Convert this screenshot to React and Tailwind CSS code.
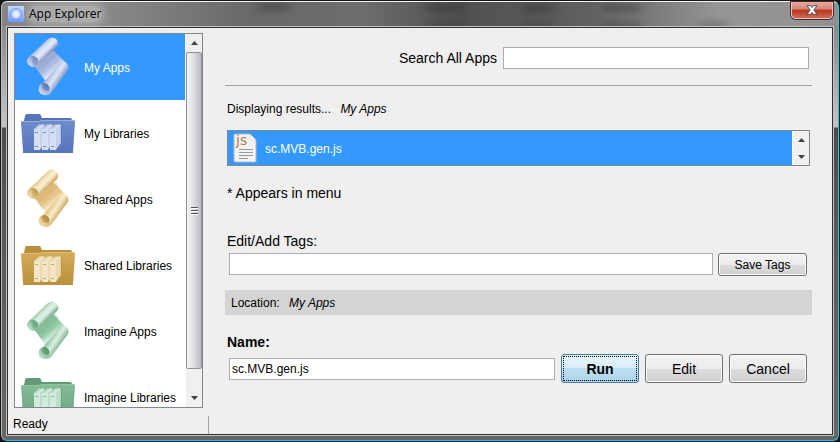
import React, { useState } from 'react';

const PALETTES = {
  blue: { light: '#dfe6f6', mid: '#a9b9e0', dark: '#6f86bd', deep: '#4f68a6', folder: '#6f8ccc', folderTop: '#5674b8', folderLow: '#5574bb', book: '#d5dff3' },
  gold: { light: '#f8ebcb', mid: '#e3c486', dark: '#c79d55', deep: '#a87c34', folder: '#d3ac59', folderTop: '#b88f3c', folderLow: '#b9913d', book: '#f3e6c8' },
  green: { light: '#dcefe2', mid: '#92c7a4', dark: '#64a77d', deep: '#4a8a62', folder: '#86bd98', folderTop: '#629a76', folderLow: '#6aa380', book: '#d3ebdb' },
};

const PLACES = [
  { label: 'My Apps', icon: 'scroll', tone: 'blue' },
  { label: 'My Libraries', icon: 'folder', tone: 'blue' },
  { label: 'Shared Apps', icon: 'scroll', tone: 'gold' },
  { label: 'Shared Libraries', icon: 'folder', tone: 'gold' },
  { label: 'Imagine Apps', icon: 'scroll', tone: 'green' },
  { label: 'Imagine Libraries', icon: 'folder', tone: 'green' },
];

function ScrollIcon({ tone }) {
  const c = PALETTES[tone];
  const id = `scroll-${tone}`;
  return (
    <svg viewBox="0 0 54 60" className="h-[60px] w-[54px] shrink-0" aria-hidden="true">
      <defs>
        <linearGradient id={`${id}-sheet`} gradientUnits="userSpaceOnUse" x1="22" y1="20" x2="38" y2="40">
          <stop offset="0" stopColor={c.mid} />
          <stop offset="0.45" stopColor={c.mid} />
          <stop offset="0.72" stopColor={c.light} />
          <stop offset="1" stopColor={c.dark} />
        </linearGradient>
        <linearGradient id={`${id}-top`} gradientUnits="userSpaceOnUse" x1="17" y1="11" x2="26" y2="20">
          <stop offset="0" stopColor={c.mid} />
          <stop offset="0.35" stopColor={c.light} />
          <stop offset="0.6" stopColor={c.light} />
          <stop offset="1" stopColor={c.dark} />
        </linearGradient>
        <linearGradient id={`${id}-bottom`} gradientUnits="userSpaceOnUse" x1="28" y1="38" x2="40" y2="46">
          <stop offset="0" stopColor={c.mid} />
          <stop offset="0.45" stopColor={c.light} />
          <stop offset="1" stopColor={c.dark} />
        </linearGradient>
        <linearGradient id={`${id}-curl`} x1="1" y1="0" x2="0" y2="1">
          <stop offset="0" stopColor={c.deep} />
          <stop offset="0.5" stopColor={c.mid} />
          <stop offset="1" stopColor={c.light} />
        </linearGradient>
      </defs>
      <path d="M12 27 L32 13 L46 27 Q48 29 46 32 L30 54 L23 42 Z" fill={`url(#${id}-sheet)`} />
      <path d="M22 46 L40 25 L44 25 Q49 29 47 33 L30 56 Q27 59 23 58 Z" fill={`url(#${id}-bottom)`} />
      <path d="M14 29 L34 12 L38 17 L19 34 Z" fill={c.dark} opacity="0.25" />
      <path d="M8 20 L27 2 Q31 -1 35 2 Q39 6 36 10 L16 28 Q12 32 8 28 Q4 24 8 20 Z" fill={`url(#${id}-top)`} />
      <path d="M8 20 Q12 17 16 21 Q19 25 15 28.5 Q12 31 8 28 Q4 24 8 20 Z" fill={`url(#${id}-curl)`} />
      <path d="M15.500 21 Q11 20 11 24.500 Q11 28 14 29 Q19 25 15.500 21 Z" fill={c.dark} opacity="0.45" />
      <ellipse cx="23" cy="52" rx="5.500" ry="6" fill={`url(#${id}-curl)`} />
      <path d="M22 46 Q19 50 23 53 Q27 55 28.500 51 Q27 46 22 46 Z" fill={c.deep} opacity="0.5" />
    </svg>
  );
}

function FolderIcon({ tone }) {
  const c = PALETTES[tone];
  const id = `folder-${tone}`;
  return (
    <svg viewBox="0 0 54 42" className="h-[42px] w-[54px] shrink-0" aria-hidden="true">
      <defs>
        <linearGradient id={id} x1="0" y1="0" x2="0" y2="1">
          <stop offset="0" stopColor={c.folder} />
          <stop offset="1" stopColor={c.folderLow} />
        </linearGradient>
      </defs>
      <path d="M3 9 L4 4 Q4 2 6 2 L18 2 Q20 2 20 4 L21 6 L49 6 Q51 6 51 8 L51 12 L3 12 Z" fill={c.folderTop} />
      <path d="M0 10 Q0 9 2 9 L18 9 L21 8 L52 8 Q54 8 54 10 L52 40 Q52 41 50 41 L4 41 Q2 41 2 39 Z" fill={`url(#${id})`} />
      <path d="M1 9.500 L18 9.500 L21 8.500 L53 8.500" stroke={c.mid} strokeWidth="1" fill="none" opacity="0.7" />
      <path d="M2 40.500 L52 40.500" stroke={c.folderTop} strokeWidth="1" />
      {[13, 21, 29].map((x) => (
        <g key={x}>
          <path d={`M${x} 17 L${x + 5} 12.500 H${x + 11} V31 L${x + 6} 38 H${x} Z`} fill={c.book} />
          <path d={`M${x + 6} 17 L${x + 11} 12.500 V31 L${x + 6} 38 Z`} fill={c.mid} opacity="0.35" />
          <path d={`M${x} 17 L${x + 5} 12.500 M${x + 2} 17 L${x + 7} 12.500`} stroke={c.dark} strokeWidth="0.6" opacity="0.6" />
          <path d={`M${x + 11.3} 12.500 V31 L${x + 6.3} 38`} stroke={c.folderTop} strokeWidth="0.7" fill="none" />
          <path d={`M${x + 1} 20.500 h3 M${x + 1} 34.500 h3`} stroke={c.folder} strokeWidth="1" />
        </g>
      ))}
    </svg>
  );
}

function ScriptFileIcon() {
  return (
    <svg viewBox="0 0 24 30" className="h-[30px] w-6 shrink-0" aria-hidden="true">
      <path d="M2 1 H17 L23 7 V28 Q23 29 22 29 H2 Q1 29 1 28 V2 Q1 1 2 1 Z" fill="#f3f3f3" stroke="#b4b8be" strokeWidth="1" />
      <path d="M17 1 L23 7 H18 Q17 7 17 6 Z" fill="#ffffff" stroke="#c5c8cc" strokeWidth="0.8" />
      <text x="3" y="12" fontFamily="DejaVu Sans, sans-serif" fontSize="14" fill="#b97843">js</text>
      <path d="M6 16.500 H20 M6 19.500 H20 M6 22.500 H20 M6 25.500 H15" stroke="#999999" strokeWidth="1" />
    </svg>
  );
}

function Arrow({ down }) {
  return (
    <svg viewBox="0 0 7 4" className="h-1 w-[7px]" aria-hidden="true">
      <path d={down ? 'M0 0 H7 L3.5 4 Z' : 'M0 4 H7 L3.5 0 Z'} fill="#404040" />
    </svg>
  );
}

function ScrollBar({ thumb }) {
  return (
    <div className="flex w-[17px] shrink-0 flex-col border-l border-white bg-[#f0f0f0]">
      <button aria-label="Scroll up" className={`flex w-full items-center justify-center ${thumb ? 'h-[18px]' : 'flex-1'}`}>
        <Arrow />
      </button>
      {thumb && (
        <div className="mb-5 flex flex-1 flex-col items-center justify-center gap-px rounded-xs border border-[#8f9296] bg-linear-to-r from-[#f4f4f5] via-[#dcdde0] to-[#b9bbc2]">
          <span className="h-0.5 w-[7px] border-b border-white bg-[#555]" />
          <span className="h-0.5 w-[7px] border-b border-white bg-[#555]" />
          <span className="h-0.5 w-[7px] border-b border-white bg-[#555]" />
        </div>
      )}
      <button aria-label="Scroll down" className={`flex w-full items-center justify-center ${thumb ? 'h-[18px]' : 'flex-1'}`}>
        <Arrow down />
      </button>
    </div>
  );
}

const BUTTON =
  'shrink-0 rounded-[3px] border border-[#707070] bg-[linear-gradient(to_bottom,#f3f3f3_0%,#ebebeb_50%,#dddddd_51%,#cfcfcf_100%)] text-black shadow-[inset_0_0_0_1px_#fafafa]';

function TitleBar() {
  return (
    <header className="relative flex h-6 items-start">
      <svg className="absolute inset-0 h-full w-full" preserveAspectRatio="none" viewBox="0 0 836 24" aria-hidden="true">
        <defs>
          <filter id="soft" x="-40%" y="-100%" width="180%" height="300%">
            <feGaussianBlur stdDeviation="5 3" />
          </filter>
        </defs>
        <g fill="#2b2b2b" opacity="0.35" filter="url(#soft)">
          <rect x="256" y="1" width="32" height="8" />
          <rect x="424" y="1" width="38" height="10" />
          <rect x="424" y="20" width="38" height="6" />
          <rect x="520" y="2" width="32" height="10" />
          <rect x="520" y="20" width="32" height="6" />
          <rect x="600" y="2" width="38" height="8" />
          <rect x="600" y="20" width="38" height="6" />
          <rect x="698" y="20" width="28" height="5" />
        </g>
      </svg>
      <div className="relative flex h-6 flex-1 items-center gap-[5px] pl-1.5">
        <span className="flex size-4 items-center justify-center bg-linear-to-b from-[#c3d6ff] to-[#6f9bf8]">
          <span className="size-3 rounded-full border border-[#6a95f5] bg-radial from-white to-[#8fb2fb]" />
        </span>
        <h1 className="rounded-full bg-white/30 font-['Open_Sans',sans-serif] text-xs leading-4 text-black shadow-[0_0_8px_3px_rgba(255,255,255,0.3)]">
          App Explorer
        </h1>
      </div>
      <button
        aria-label="Close"
        className="relative mr-[5px] flex h-[17px] w-[42px] items-center justify-center rounded-b-[5px] border border-t-0 border-[#e8c5c0] bg-[linear-gradient(to_bottom,#e8a9a0_0%,#d58478_45%,#bb3219_50%,#cf6a55_100%)] shadow-[0_0_0_1px_#4c2a28]"
      >
        <svg viewBox="0 0 12 10" className="h-2.5 w-3" aria-hidden="true">
          <path d="M1 .7 H4.5 L6 2.6 L7.5 .7 H11 L7.9 5 L11 9.3 H7.5 L6 7.4 L4.5 9.3 H1 L4.1 5 Z" fill="#fff" stroke="#4b5263" strokeWidth="1" />
        </svg>
      </button>
    </header>
  );
}

export default function App() {
  const [place, setPlace] = useState('My Apps');

  return (
    <div className="h-screen bg-[#15151a] p-px font-['Liberation_Sans',Arial,sans-serif] text-xs text-black">
      <div className="flex h-full flex-col rounded-[6px] border border-t-[#f4f4f4] border-r-[#14ccf2] border-b-[#14ccf2] border-l-[#b8b8b8] bg-[linear-gradient(to_right,#858585_0%,#8a8a8a_12%,#686868_30%,#6d6d6d_43%,#505050_55%,#606060_70%,#969696_86%,#909090_100%)]">
        <TitleBar />
        <div className="flex min-h-0 flex-1 rounded-b-[5px] bg-[linear-gradient(to_bottom,#8a8a8a_0px,#c4c4c4_101px,#4c4c4c_102px,#5c5c5c_60%,#666666_100%)] px-1 pb-1">
          <div className="flex min-h-0 flex-1 flex-col border border-[#c4c4c4]">
            <div className="flex min-h-0 flex-1 flex-col border border-[#303030] bg-[#efefef]">
              <div className="flex min-h-0 flex-1 pl-1.5">
                <nav aria-label="Places" className="mt-[5px] flex w-[189px] shrink-0 border border-[#828790] bg-white">
                  <ul className="min-w-0 flex-1 overflow-hidden">
                    {PLACES.map((p) => (
                      <li key={p.label}>
                        <button
                          onClick={() => setPlace(p.label)}
                          className={`flex h-[66px] w-full items-center gap-[9px] pl-1.5 text-left whitespace-nowrap ${
                            p.label === place ? 'bg-[#3399ff] text-white' : 'text-black'
                          }`}
                        >
                          {p.icon === 'scroll' ? <ScrollIcon tone={p.tone} /> : <FolderIcon tone={p.tone} />}
                          <span className="pt-0.5">{p.label}</span>
                        </button>
                      </li>
                    ))}
                  </ul>
                  <ScrollBar thumb />
                </nav>

                <main className="flex min-w-0 flex-1 flex-col pr-5 pl-[22px]">
                  <div className="flex items-center justify-end gap-1.5 border-b border-[#a0a0a0] pt-[19px] pr-[3px] pb-4">
                    <label htmlFor="search" className="text-sm leading-5">Search All Apps</label>
                    <input id="search" className="h-[22px] w-[306px] border border-[#abadb3] bg-white px-0.5 outline-none" />
                  </div>

                  <p className="mt-[15px] pl-0.5 leading-4">
                    Displaying results... <em className="pl-1.5">My Apps</em>
                  </p>

                  <div className="mt-[13px] mr-0.5 ml-0.5 flex h-9 border border-[#828790]">
                    <button className="flex flex-1 items-center gap-2 bg-[#3399ff] pl-[5px] text-left text-white">
                      <ScriptFileIcon />
                      <span className="pt-0.5">sc.MVB.gen.js</span>
                    </button>
                    <ScrollBar />
                  </div>

                  <p className="mt-[17px] pl-0.5 text-sm leading-5">* Appears in menu</p>

                  <label htmlFor="tags" className="mt-7 pl-0.5 text-sm leading-5">Edit/Add Tags:</label>
                  <div className="mt-0.5 flex items-start gap-[5px] pr-[5px] pl-1">
                    <input id="tags" className="h-[22px] min-w-0 flex-1 border border-[#abadb3] bg-white px-0.5 outline-none" />
                    <button className={`h-[23px] w-[89px] ${BUTTON}`}>Save Tags</button>
                  </div>

                  <p className="mt-3.5 bg-[#d4d4d4] px-1.5 pt-[5px] pb-1 leading-4">
                    Location: <em className="pl-1.5">My Apps</em>
                  </p>

                  <label htmlFor="name" className="mt-[17px] pl-0.5 text-sm leading-5 font-bold">Name:</label>
                  <div className="mt-0.5 flex items-center gap-1.5 pr-[5px] pl-1 text-sm">
                    <input
                      id="name"
                      defaultValue="sc.MVB.gen.js"
                      className="h-[22px] min-w-0 flex-1 border border-[#abadb3] bg-white px-0.5 text-xs outline-none"
                    />
                    <button className="h-[29px] w-[78px] shrink-0 rounded-[3px] border border-[#3c7fb1] bg-[linear-gradient(to_bottom,#eaf5fb_0%,#d9eefa_48%,#bfe0f3_50%,#abd3ea_100%)] p-px font-bold">
                      <span className="flex h-full items-center justify-center border border-dotted border-black">Run</span>
                    </button>
                    <button className={`h-[29px] w-[78px] ${BUTTON}`}>Edit</button>
                    <button className={`h-[29px] w-[78px] ${BUTTON}`}>Cancel</button>
                  </div>
                </main>
              </div>

              <footer className="flex h-[26px] shrink-0 items-end">
                <span className="w-[200px] pb-0.5 pl-[5px] leading-4">Ready</span>
                <span className="h-[18px] border-l border-[#a0a0a0]" />
              </footer>
            </div>
          </div>
        </div>
      </div>
    </div>
  );
}
